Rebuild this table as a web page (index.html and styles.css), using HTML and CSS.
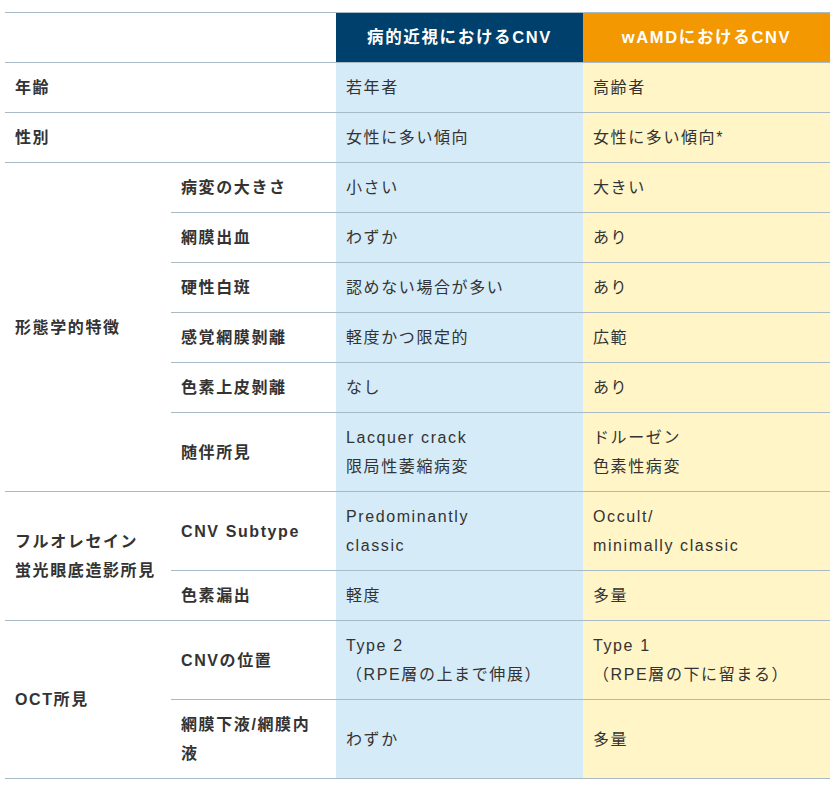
FILE: index.html
```html
<!DOCTYPE html>
<html lang="ja">
<head>
<meta charset="utf-8">
<title>CNV比較</title>
<link rel="stylesheet" href="styles.css">
</head>
<body>
<table class="cmp">
  <colgroup>
    <col class="c-label"><col class="c-sub"><col class="c-data"><col class="c-data">
  </colgroup>
  <thead>
    <tr>
      <th colspan="2" class="blank"></th>
      <th class="h-myopia">病的近視におけるCNV</th>
      <th class="h-amd">wAMDにおけるCNV</th>
    </tr>
  </thead>
  <tbody>
    <tr>
      <th colspan="2" class="label">年齢</th>
      <td class="myopia">若年者</td>
      <td class="amd">高齢者</td>
    </tr>
    <tr>
      <th colspan="2" class="label">性別</th>
      <td class="myopia">女性に多い傾向</td>
      <td class="amd">女性に多い傾向*</td>
    </tr>
    <tr>
      <th rowspan="6" class="label">形態学的特徴</th>
      <th class="label">病変の大きさ</th>
      <td class="myopia">小さい</td>
      <td class="amd">大きい</td>
    </tr>
    <tr>
      <th class="label">網膜出血</th>
      <td class="myopia">わずか</td>
      <td class="amd">あり</td>
    </tr>
    <tr>
      <th class="label">硬性白斑</th>
      <td class="myopia">認めない場合が多い</td>
      <td class="amd">あり</td>
    </tr>
    <tr>
      <th class="label">感覚網膜剝離</th>
      <td class="myopia">軽度かつ限定的</td>
      <td class="amd">広範</td>
    </tr>
    <tr>
      <th class="label">色素上皮剝離</th>
      <td class="myopia">なし</td>
      <td class="amd">あり</td>
    </tr>
    <tr>
      <th class="label">随伴所見</th>
      <td class="myopia">Lacquer crack<br>限局性萎縮病変</td>
      <td class="amd">ドルーゼン<br>色素性病変</td>
    </tr>
    <tr>
      <th rowspan="2" class="label">フルオレセイン<br>蛍光眼底造影所見</th>
      <th class="label">CNV Subtype</th>
      <td class="myopia">Predominantly<br>classic</td>
      <td class="amd">Occult/<br>minimally classic</td>
    </tr>
    <tr>
      <th class="label">色素漏出</th>
      <td class="myopia">軽度</td>
      <td class="amd">多量</td>
    </tr>
    <tr>
      <th rowspan="2" class="label">OCT所見</th>
      <th class="label">CNVの位置</th>
      <td class="myopia">Type 2<br>（RPE層の上まで伸展）</td>
      <td class="amd">Type 1<br>（RPE層の下に留まる）</td>
    </tr>
    <tr>
      <th class="label">網膜下液/網膜内液</th>
      <td class="myopia">わずか</td>
      <td class="amd">多量</td>
    </tr>
  </tbody>
</table>
</body>
</html>
```

FILE: styles.css
```css
html, body {
  margin: 0;
  background: #ffffff;
}

body {
  padding: 12px 8px 0 5px;
  font-family: "Liberation Sans", "Noto Sans CJK JP", sans-serif;
  font-size: 16px;
  color: #333333;
}

.cmp {
  width: 825px;
  border-collapse: collapse;
  table-layout: fixed;
  border-top: 1px solid #a9bac7;
}

.c-label { width: 166px; }
.c-sub { width: 165px; }
.c-data { width: 247px; }

.cmp th,
.cmp td {
  padding: 10px 10px;
  line-height: 29px;
  letter-spacing: 0.1em;
  vertical-align: middle;
  border-bottom: 1px solid #a9bac7;
  text-align: left;
}

.cmp .label {
  font-weight: bold;
  color: #333333;
}

.cmp thead th {
  font-weight: bold;
  font-size: 16.5px;
  color: #ffffff;
  text-align: center;
  letter-spacing: 0.1em;
}

.cmp .h-myopia { background: #00406c; }
.cmp .h-amd { background: #f39800; }

.cmp .myopia { background: #d6ebf8; }
.cmp .amd { background: #fff5c7; }
```
